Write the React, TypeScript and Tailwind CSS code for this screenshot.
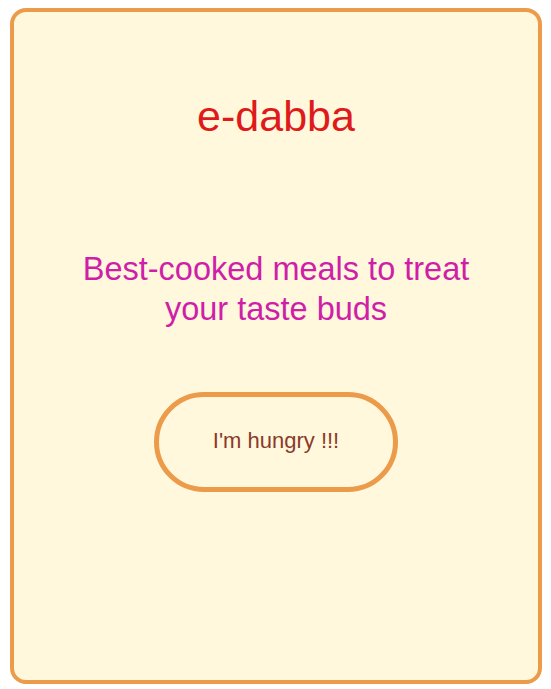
export default function App() {
  return (
    <div className="w-[551px] h-[689px] bg-white pt-[8px] pl-[10px]" style={{ fontFamily: '"Liberation Sans", Arial, sans-serif' }}>
      <div className="w-[532px] h-[676px] bg-[#fff8dc] border-4 border-[#ec9b4b] rounded-[16px] flex flex-col items-center">
        <h1 className="mt-[83px] text-[43px] leading-[43px] text-[#df1a1a]">e-dabba</h1>
        <p className="mt-[111px] text-[32.5px] leading-[40px] text-[#cf1fa8] text-center w-[430px]">
          Best-cooked meals to treat your taste buds
        </p>
        <button className="mt-[63px] w-[244px] h-[100px] rounded-full border-[5px] border-[#ec9b4b] bg-transparent text-[22px] text-[#8b3a2a] flex items-center justify-center pb-[3px]">
          I'm hungry !!!
        </button>
      </div>
    </div>
  );
}
